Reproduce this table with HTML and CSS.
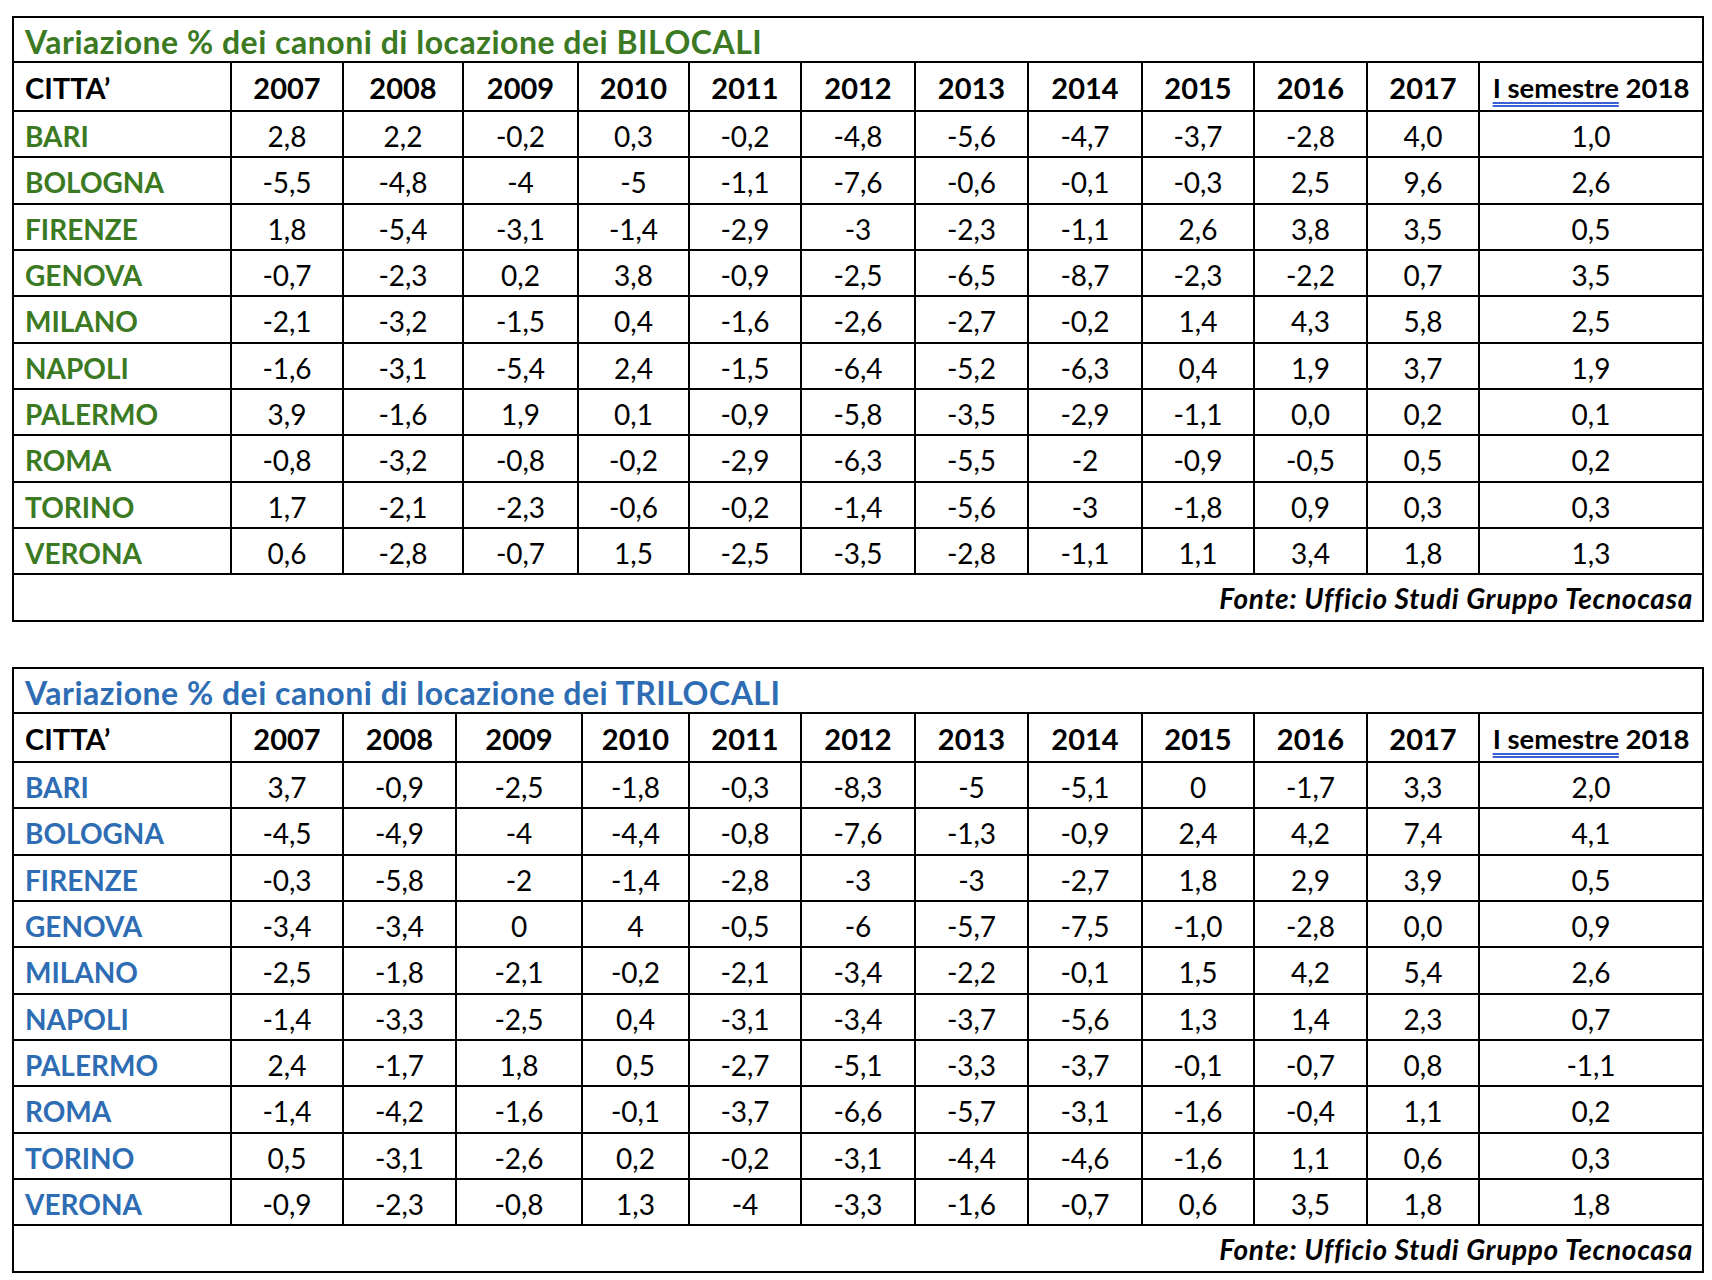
FILE: index.html
```html
<!DOCTYPE html>
<html lang="it">
<head>
<meta charset="utf-8">
<title>Variazione % dei canoni di locazione</title>
<link rel="stylesheet" href="styles.css">
</head>
<body>
<div class="page">
  <div class="tbl tbl-bi">
    <div class="title green">Variazione % dei canoni di locazione dei BILOCALI</div>
    <div class="hd city-h">CITTA’</div>
    <div class="hd">2007</div><div class="hd">2008</div><div class="hd">2009</div><div class="hd">2010</div><div class="hd">2011</div><div class="hd">2012</div><div class="hd">2013</div><div class="hd">2014</div><div class="hd">2015</div><div class="hd">2016</div><div class="hd">2017</div>
    <div class="hd hd-sem"><span class="sem">I semestre</span>&nbsp;2018</div>

    <div class="city green">BARI</div><div class="n">2,8</div><div class="n">2,2</div><div class="n">-0,2</div><div class="n">0,3</div><div class="n">-0,2</div><div class="n">-4,8</div><div class="n">-5,6</div><div class="n">-4,7</div><div class="n">-3,7</div><div class="n">-2,8</div><div class="n">4,0</div><div class="n">1,0</div>
    <div class="city green">BOLOGNA</div><div class="n">-5,5</div><div class="n">-4,8</div><div class="n">-4</div><div class="n">-5</div><div class="n">-1,1</div><div class="n">-7,6</div><div class="n">-0,6</div><div class="n">-0,1</div><div class="n">-0,3</div><div class="n">2,5</div><div class="n">9,6</div><div class="n">2,6</div>
    <div class="city green">FIRENZE</div><div class="n">1,8</div><div class="n">-5,4</div><div class="n">-3,1</div><div class="n">-1,4</div><div class="n">-2,9</div><div class="n">-3</div><div class="n">-2,3</div><div class="n">-1,1</div><div class="n">2,6</div><div class="n">3,8</div><div class="n">3,5</div><div class="n">0,5</div>
    <div class="city green">GENOVA</div><div class="n">-0,7</div><div class="n">-2,3</div><div class="n">0,2</div><div class="n">3,8</div><div class="n">-0,9</div><div class="n">-2,5</div><div class="n">-6,5</div><div class="n">-8,7</div><div class="n">-2,3</div><div class="n">-2,2</div><div class="n">0,7</div><div class="n">3,5</div>
    <div class="city green">MILANO</div><div class="n">-2,1</div><div class="n">-3,2</div><div class="n">-1,5</div><div class="n">0,4</div><div class="n">-1,6</div><div class="n">-2,6</div><div class="n">-2,7</div><div class="n">-0,2</div><div class="n">1,4</div><div class="n">4,3</div><div class="n">5,8</div><div class="n">2,5</div>
    <div class="city green">NAPOLI</div><div class="n">-1,6</div><div class="n">-3,1</div><div class="n">-5,4</div><div class="n">2,4</div><div class="n">-1,5</div><div class="n">-6,4</div><div class="n">-5,2</div><div class="n">-6,3</div><div class="n">0,4</div><div class="n">1,9</div><div class="n">3,7</div><div class="n">1,9</div>
    <div class="city green">PALERMO</div><div class="n">3,9</div><div class="n">-1,6</div><div class="n">1,9</div><div class="n">0,1</div><div class="n">-0,9</div><div class="n">-5,8</div><div class="n">-3,5</div><div class="n">-2,9</div><div class="n">-1,1</div><div class="n">0,0</div><div class="n">0,2</div><div class="n">0,1</div>
    <div class="city green">ROMA</div><div class="n">-0,8</div><div class="n">-3,2</div><div class="n">-0,8</div><div class="n">-0,2</div><div class="n">-2,9</div><div class="n">-6,3</div><div class="n">-5,5</div><div class="n">-2</div><div class="n">-0,9</div><div class="n">-0,5</div><div class="n">0,5</div><div class="n">0,2</div>
    <div class="city green">TORINO</div><div class="n">1,7</div><div class="n">-2,1</div><div class="n">-2,3</div><div class="n">-0,6</div><div class="n">-0,2</div><div class="n">-1,4</div><div class="n">-5,6</div><div class="n">-3</div><div class="n">-1,8</div><div class="n">0,9</div><div class="n">0,3</div><div class="n">0,3</div>
    <div class="city green">VERONA</div><div class="n">0,6</div><div class="n">-2,8</div><div class="n">-0,7</div><div class="n">1,5</div><div class="n">-2,5</div><div class="n">-3,5</div><div class="n">-2,8</div><div class="n">-1,1</div><div class="n">1,1</div><div class="n">3,4</div><div class="n">1,8</div><div class="n">1,3</div>
    <div class="foot">Fonte: Ufficio Studi Gruppo Tecnocasa</div>
  </div>

  <div class="tbl tbl-tri">
    <div class="title blue">Variazione % dei canoni di locazione dei TRILOCALI</div>
    <div class="hd city-h">CITTA’</div>
    <div class="hd">2007</div><div class="hd">2008</div><div class="hd">2009</div><div class="hd">2010</div><div class="hd">2011</div><div class="hd">2012</div><div class="hd">2013</div><div class="hd">2014</div><div class="hd">2015</div><div class="hd">2016</div><div class="hd">2017</div>
    <div class="hd hd-sem"><span class="sem">I semestre</span>&nbsp;2018</div>

    <div class="city blue">BARI</div><div class="n">3,7</div><div class="n">-0,9</div><div class="n">-2,5</div><div class="n">-1,8</div><div class="n">-0,3</div><div class="n">-8,3</div><div class="n">-5</div><div class="n">-5,1</div><div class="n">0</div><div class="n">-1,7</div><div class="n">3,3</div><div class="n">2,0</div>
    <div class="city blue">BOLOGNA</div><div class="n">-4,5</div><div class="n">-4,9</div><div class="n">-4</div><div class="n">-4,4</div><div class="n">-0,8</div><div class="n">-7,6</div><div class="n">-1,3</div><div class="n">-0,9</div><div class="n">2,4</div><div class="n">4,2</div><div class="n">7,4</div><div class="n">4,1</div>
    <div class="city blue">FIRENZE</div><div class="n">-0,3</div><div class="n">-5,8</div><div class="n">-2</div><div class="n">-1,4</div><div class="n">-2,8</div><div class="n">-3</div><div class="n">-3</div><div class="n">-2,7</div><div class="n">1,8</div><div class="n">2,9</div><div class="n">3,9</div><div class="n">0,5</div>
    <div class="city blue">GENOVA</div><div class="n">-3,4</div><div class="n">-3,4</div><div class="n">0</div><div class="n">4</div><div class="n">-0,5</div><div class="n">-6</div><div class="n">-5,7</div><div class="n">-7,5</div><div class="n">-1,0</div><div class="n">-2,8</div><div class="n">0,0</div><div class="n">0,9</div>
    <div class="city blue">MILANO</div><div class="n">-2,5</div><div class="n">-1,8</div><div class="n">-2,1</div><div class="n">-0,2</div><div class="n">-2,1</div><div class="n">-3,4</div><div class="n">-2,2</div><div class="n">-0,1</div><div class="n">1,5</div><div class="n">4,2</div><div class="n">5,4</div><div class="n">2,6</div>
    <div class="city blue">NAPOLI</div><div class="n">-1,4</div><div class="n">-3,3</div><div class="n">-2,5</div><div class="n">0,4</div><div class="n">-3,1</div><div class="n">-3,4</div><div class="n">-3,7</div><div class="n">-5,6</div><div class="n">1,3</div><div class="n">1,4</div><div class="n">2,3</div><div class="n">0,7</div>
    <div class="city blue">PALERMO</div><div class="n">2,4</div><div class="n">-1,7</div><div class="n">1,8</div><div class="n">0,5</div><div class="n">-2,7</div><div class="n">-5,1</div><div class="n">-3,3</div><div class="n">-3,7</div><div class="n">-0,1</div><div class="n">-0,7</div><div class="n">0,8</div><div class="n">-1,1</div>
    <div class="city blue">ROMA</div><div class="n">-1,4</div><div class="n">-4,2</div><div class="n">-1,6</div><div class="n">-0,1</div><div class="n">-3,7</div><div class="n">-6,6</div><div class="n">-5,7</div><div class="n">-3,1</div><div class="n">-1,6</div><div class="n">-0,4</div><div class="n">1,1</div><div class="n">0,2</div>
    <div class="city blue">TORINO</div><div class="n">0,5</div><div class="n">-3,1</div><div class="n">-2,6</div><div class="n">0,2</div><div class="n">-0,2</div><div class="n">-3,1</div><div class="n">-4,4</div><div class="n">-4,6</div><div class="n">-1,6</div><div class="n">1,1</div><div class="n">0,6</div><div class="n">0,3</div>
    <div class="city blue">VERONA</div><div class="n">-0,9</div><div class="n">-2,3</div><div class="n">-0,8</div><div class="n">1,3</div><div class="n">-4</div><div class="n">-3,3</div><div class="n">-1,6</div><div class="n">-0,7</div><div class="n">0,6</div><div class="n">3,5</div><div class="n">1,8</div><div class="n">1,8</div>
    <div class="foot">Fonte: Ufficio Studi Gruppo Tecnocasa</div>
  </div>
</div>
</body>
</html>
```
FILE: styles.css
```css
html, body {
  margin: 0;
  padding: 0;
  background: #ffffff;
}

body {
  font-family: Lato, "Liberation Sans", sans-serif;
  color: #000;
}

.page {
  padding: 16px 0 0 12px;
  display: flex;
  flex-direction: column;
  gap: 45px;
  align-items: flex-start;
}

.tbl {
  display: grid;
  gap: 2px;
  padding: 2px;
  background: #000;
  grid-template-rows: 43px 47px 44px 45px 44px 44px 45px 44px 44px 45px 44px 44px 45px;
}

.tbl-bi {
  grid-template-columns: 216px 110px 118px 113px 109px 110px 112px 111px 112px 110px 111px 110px 222px;
}

.tbl-tri {
  grid-template-columns: 216px 110px 111px 124px 105px 110px 112px 111px 112px 110px 111px 110px 222px;
}

.tbl > div {
  background: #fff;
  display: flex;
  align-items: center;
  justify-content: center;
  white-space: nowrap;
}

.title {
  grid-column: 1 / -1;
  justify-content: flex-start !important;
  padding: 4px 0 0 11px;
  font-weight: 700;
  font-size: 32px;
  letter-spacing: 0.5px;
}

.green { color: #3b7a22; }
.blue { color: #2e6db4; }

.hd {
  font-weight: 700;
  font-size: 29px;
  padding-top: 2px;
}

.hd-sem {
  font-size: 27.5px;
}

.city-h {
  justify-content: flex-start !important;
  padding-left: 11px;
}

.sem {
  text-decoration-line: underline;
  text-decoration-style: double;
  text-decoration-color: #3a62d4;
  text-decoration-thickness: 1.5px;
  text-underline-offset: 4px;
}

.city {
  justify-content: flex-start !important;
  padding: 3px 0 0 11px;
  font-weight: 700;
  font-size: 28px;
}

.n {
  font-size: 28px;
  padding-top: 3px;
}

.foot {
  grid-column: 1 / -1;
  justify-content: flex-end !important;
  padding-right: 9px;
  font-weight: 700;
  font-style: italic;
  font-size: 28px;
  letter-spacing: 0.7px;
}
```
